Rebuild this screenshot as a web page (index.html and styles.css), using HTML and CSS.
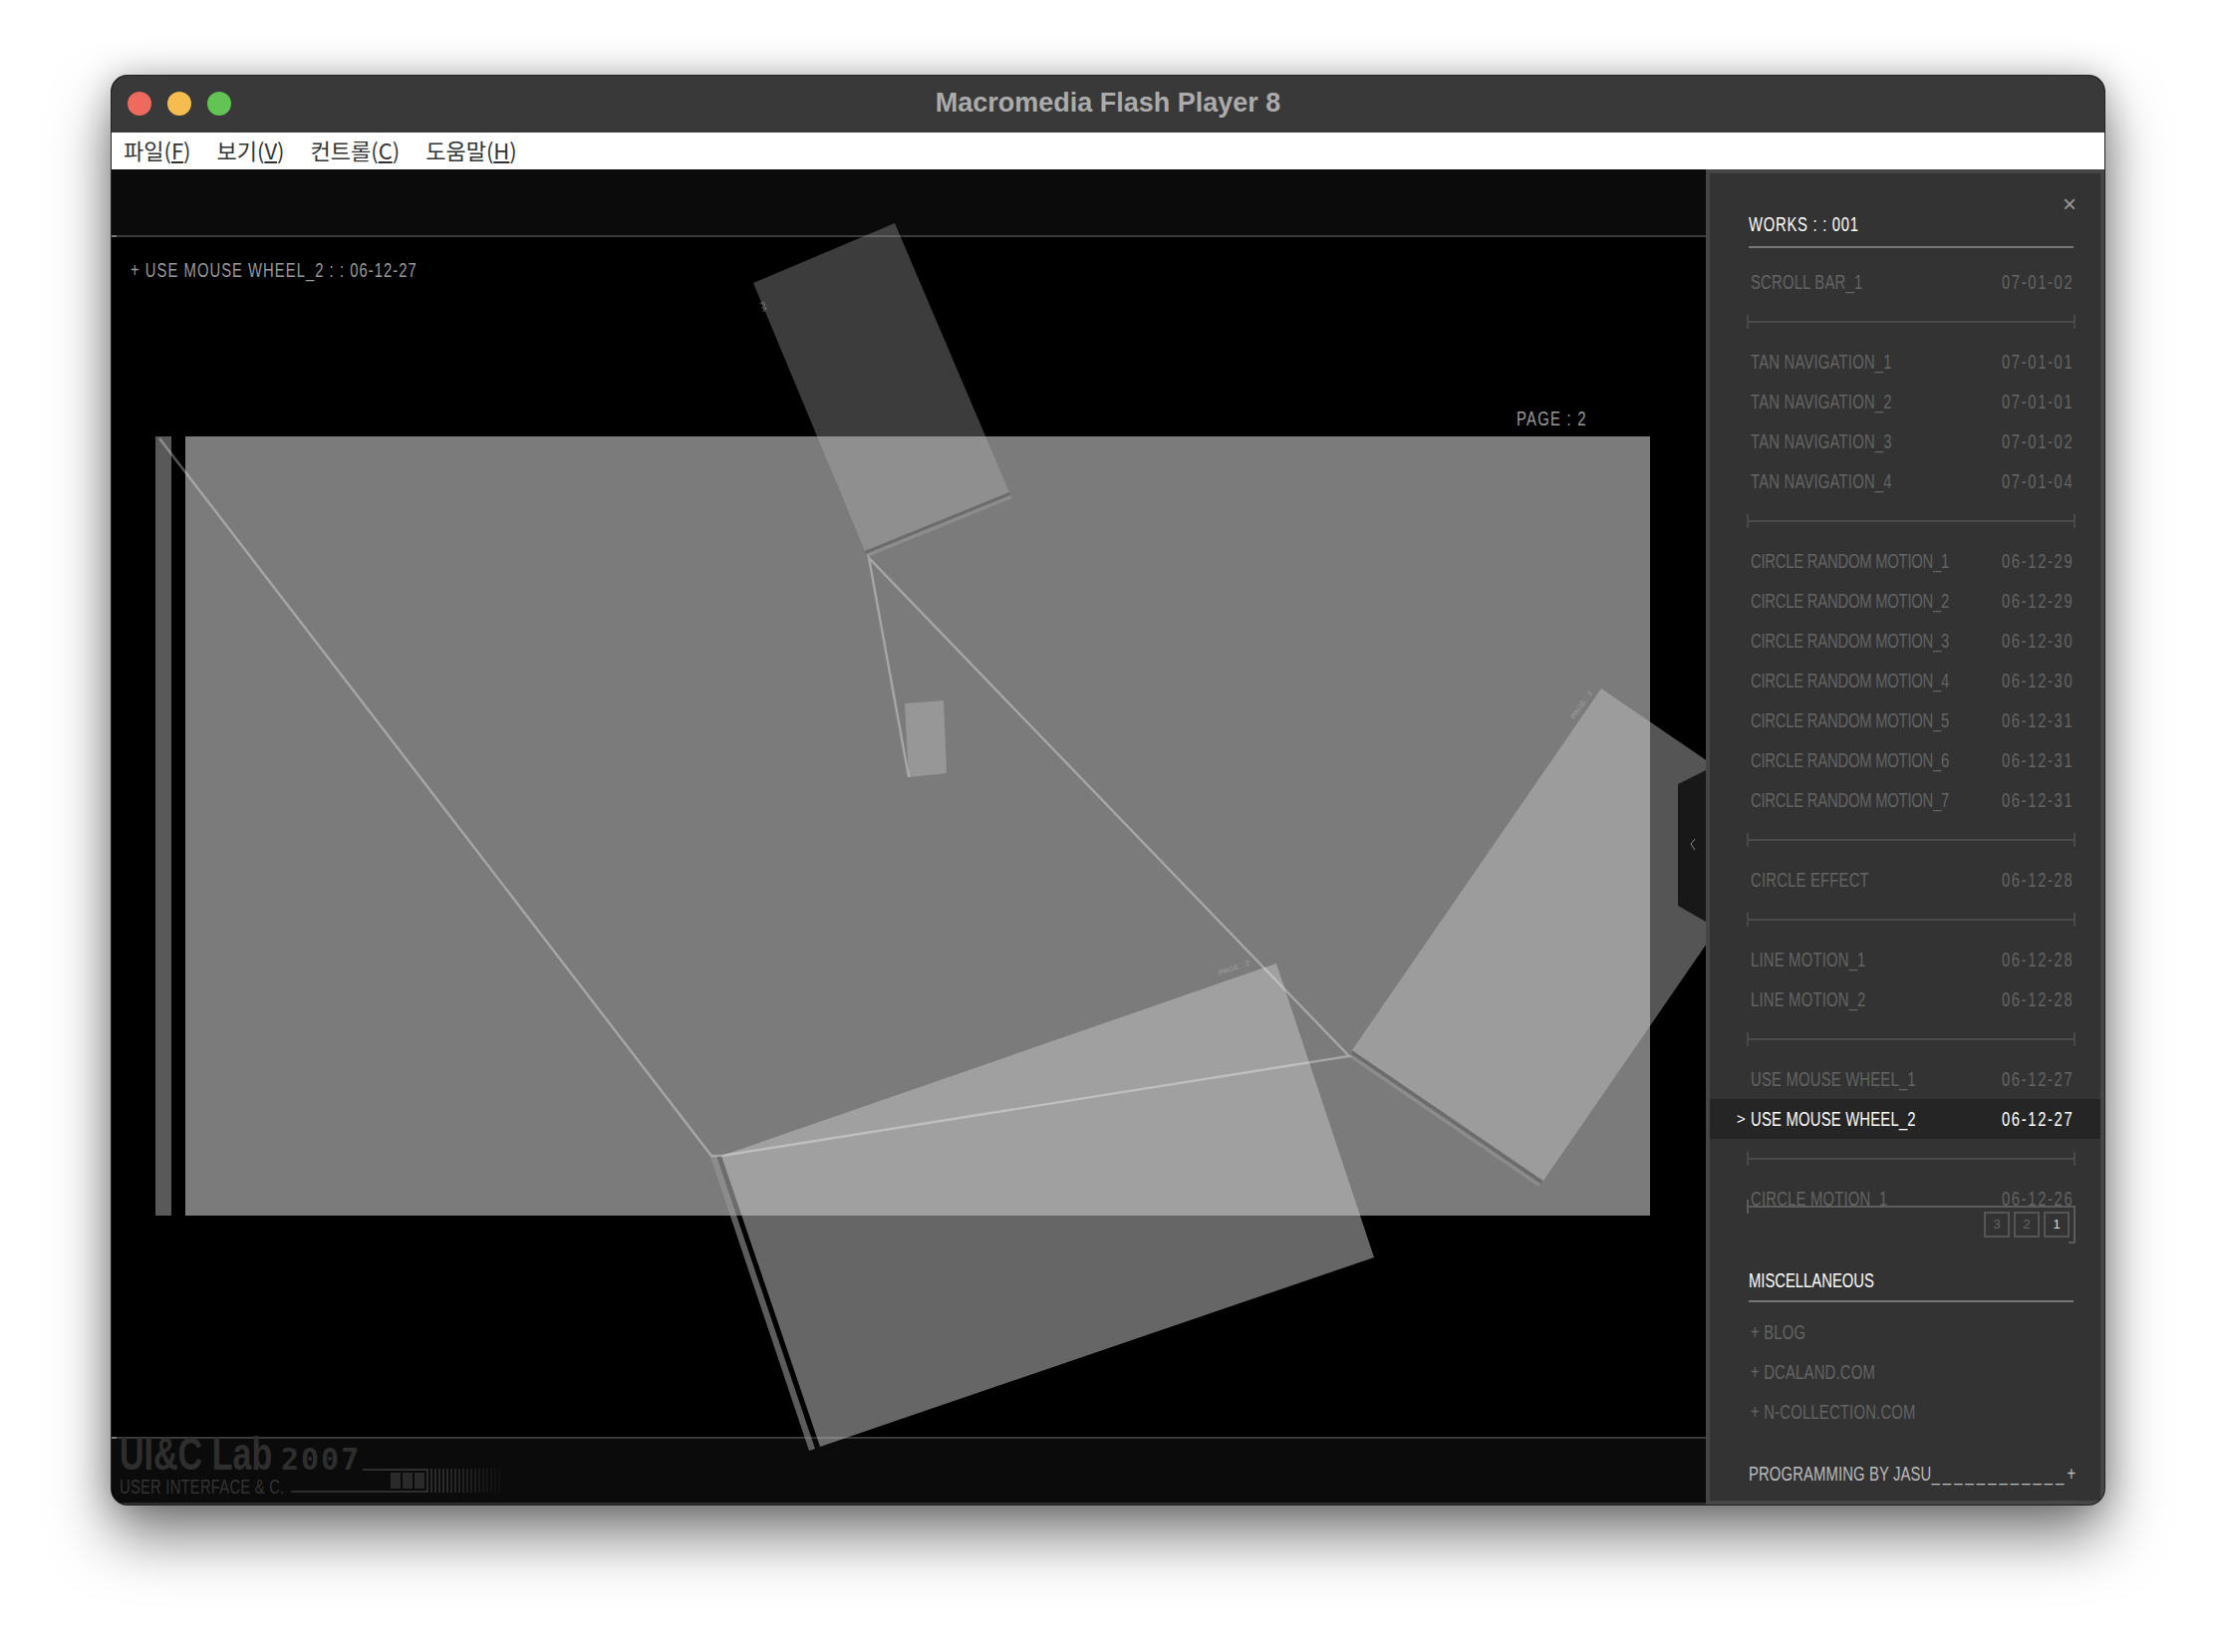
FILE: index.html
```html
<!DOCTYPE html>
<html lang="en">
<head>
  <meta charset="UTF-8">
  <title>Macromedia Flash Player 8</title>
  <link rel="stylesheet" href="styles.css">
</head>
<body>

<div class="window">
  <header class="titlebar">
    <div class="lights">
      <span class="light red"></span>
      <span class="light yellow"></span>
      <span class="light green"></span>
    </div>
    <h1>Macromedia Flash Player 8</h1>
  </header>

  <nav class="menubar">
    <a href="#">파일(<u>F</u>)</a>
    <a href="#">보기(<u>V</u>)</a>
    <a href="#">컨트롤(<u>C</u>)</a>
    <a href="#">도움말(<u>H</u>)</a>
  </nav>

  <div class="main">
    <section class="stage">
      <div class="stage-top"></div>
      <div class="stage-mid">
        <p class="caption"><span class="px">+ USE MOUSE WHEEL_2 : : 06-12-27</span></p>
        <p class="page-no"><span class="px">PAGE : 2</span></p>
      </div>
      <div class="stage-foot">
        <div class="brand"><span class="brand-name">UI&amp;C Lab</span><span class="brand-year">2007</span></div>
        <div class="tagline"><span class="px">USER INTERFACE &amp; C.</span></div>
      </div>

      <!-- the flash scene, in page coordinates -->
      <svg class="scene" viewBox="112 170 1600 1340">
        <rect x="112" y="236" width="5" height="2" fill="#777"/>
        <rect x="112" y="1442" width="5" height="2" fill="#777"/>

        <rect x="156" y="438" width="16" height="782" fill="#595959"/>
        <rect x="186" y="438" width="1470" height="782" fill="#7b7b7b"/>

        <polygon points="756,284 898,224 1013,494 868,553" fill="#b9b9b9" opacity="0.325"/>
        <polygon class="gap" points="868,553 1013,494 1014,497 869,556"/>
        <polygon class="band" points="869,556 1014,497 1016,500 871,559"/>

        <polygon points="908,706 947,703 950,776 912,780" fill="#c4c4c4" opacity="0.4"/>

        <polygon points="1607,691 1799,822 1549,1185 1357,1054" fill="#cacaca" opacity="0.42"/>
        <polygon class="gap" points="1358,1055 1548,1185 1546,1188 1356,1058"/>
        <polygon class="band" points="1356,1058 1546,1188 1544,1191 1354,1061"/>

        <polygon points="1281,967 1379,1262 823,1452 724,1160" fill="#c0c0c0" opacity="0.53"/>
        <polygon class="gap" points="719,1160 724,1160 823,1452 818,1454"/>
        <polygon class="band" points="713,1161 719,1160 818,1454 812,1456"/>

        <polyline class="wire" points="160,440 714,1160 724,1160 1354,1060 872,560 912,780"/>

        <g class="tiny-text">
          <text transform="translate(1224,979) rotate(-19)">PAGE : 2</text>
          <text transform="translate(1580,722) rotate(-55)">PAGE : 2</text>
          <text transform="translate(762,304) rotate(67)">PA</text>
        </g>

        <!-- collapse tab -->
        <polygon points="1684,787 1712,773 1712,925 1684,909" fill="#181818"/>
        <polyline points="1701,842 1697,847 1701,853" fill="none" stroke="#888" stroke-width="1"/>

        <!-- progress strip in the footer -->
        <g fill="none" stroke="#2e2e2e" stroke-width="2">
          <polyline points="364,1475 429,1475 429,1497 292,1497"/>
        </g>
        <g fill="#2a2a2a">
          <rect x="392" y="1478" width="10" height="16"/>
          <rect x="404" y="1478" width="10" height="16"/>
          <rect x="416" y="1478" width="10" height="16"/>
        </g>
        <g stroke="#2b2b2b" stroke-width="2">
          <line x1="433" y1="1474" x2="433" y2="1498"/>
          <line x1="437" y1="1474" x2="437" y2="1498"/>
          <line x1="441" y1="1474" x2="441" y2="1498"/>
          <line x1="445" y1="1474" x2="445" y2="1498"/>
          <line x1="449" y1="1474" x2="449" y2="1498"/>
          <line x1="453" y1="1474" x2="453" y2="1498" stroke="#272727"/>
          <line x1="457" y1="1474" x2="457" y2="1498" stroke="#272727"/>
          <line x1="461" y1="1474" x2="461" y2="1498" stroke="#242424"/>
          <line x1="465" y1="1474" x2="465" y2="1498" stroke="#222"/>
          <line x1="469" y1="1474" x2="469" y2="1498" stroke="#202020"/>
          <line x1="473" y1="1474" x2="473" y2="1498" stroke="#1e1e1e"/>
          <line x1="477" y1="1474" x2="477" y2="1498" stroke="#1c1c1c"/>
          <line x1="481" y1="1474" x2="481" y2="1498" stroke="#1a1a1a"/>
          <line x1="485" y1="1474" x2="485" y2="1498" stroke="#181818"/>
          <line x1="489" y1="1474" x2="489" y2="1498" stroke="#161616"/>
          <line x1="493" y1="1474" x2="493" y2="1498" stroke="#141414"/>
          <line x1="497" y1="1474" x2="497" y2="1498" stroke="#121212"/>
          <line x1="501" y1="1474" x2="501" y2="1498" stroke="#101010"/>
        </g>
      </svg>
    </section>

    <aside class="sidebar">
      <button class="close">×</button>
      <h2 class="side-title works"><span class="px">WORKS : : 001</span></h2>

      <div class="work-list">
        <div class="row"><span class="px">SCROLL BAR_1</span><span class="px date">07-01-02</span></div>
        <div class="sep"></div>
        <div class="row"><span class="px">TAN NAVIGATION_1</span><span class="px date">07-01-01</span></div>
        <div class="row"><span class="px">TAN NAVIGATION_2</span><span class="px date">07-01-01</span></div>
        <div class="row"><span class="px">TAN NAVIGATION_3</span><span class="px date">07-01-02</span></div>
        <div class="row"><span class="px">TAN NAVIGATION_4</span><span class="px date">07-01-04</span></div>
        <div class="sep"></div>
        <div class="row"><span class="px tight">CIRCLE RANDOM MOTION_1</span><span class="px date">06-12-29</span></div>
        <div class="row"><span class="px tight">CIRCLE RANDOM MOTION_2</span><span class="px date">06-12-29</span></div>
        <div class="row"><span class="px tight">CIRCLE RANDOM MOTION_3</span><span class="px date">06-12-30</span></div>
        <div class="row"><span class="px tight">CIRCLE RANDOM MOTION_4</span><span class="px date">06-12-30</span></div>
        <div class="row"><span class="px tight">CIRCLE RANDOM MOTION_5</span><span class="px date">06-12-31</span></div>
        <div class="row"><span class="px tight">CIRCLE RANDOM MOTION_6</span><span class="px date">06-12-31</span></div>
        <div class="row"><span class="px tight">CIRCLE RANDOM MOTION_7</span><span class="px date">06-12-31</span></div>
        <div class="sep"></div>
        <div class="row"><span class="px">CIRCLE EFFECT</span><span class="px date">06-12-28</span></div>
        <div class="sep"></div>
        <div class="row"><span class="px">LINE MOTION_1</span><span class="px date">06-12-28</span></div>
        <div class="row"><span class="px">LINE MOTION_2</span><span class="px date">06-12-28</span></div>
        <div class="sep"></div>
        <div class="row"><span class="px">USE MOUSE WHEEL_1</span><span class="px date">06-12-27</span></div>
        <div class="row active"><span class="px">USE MOUSE WHEEL_2</span><span class="px date">06-12-27</span></div>
        <div class="sep"></div>
        <div class="row"><span class="px">CIRCLE MOTION_1</span><span class="px date">06-12-26</span></div>
      </div>

      <div class="pager">
        <a href="#">3</a>
        <a href="#">2</a>
        <a href="#" class="current">1</a>
      </div>

      <h2 class="side-title misc"><span class="px">MISCELLANEOUS</span></h2>
      <ul class="links">
        <li><span class="px">+ BLOG</span></li>
        <li><span class="px">+ DCALAND.COM</span></li>
        <li><span class="px">+ N-COLLECTION.COM</span></li>
      </ul>

      <p class="credit"><span class="px">PROGRAMMING BY JASU<span class="dashes">____________</span>+</span></p>
    </aside>
  </div>
</div>

</body>
</html>
```

FILE: styles.css
```css
html, body {
  margin: 0;
  padding: 0;
  background: #fff;
}
body {
  width: 2224px;
  height: 1658px;
  padding: 76px 112px 0;
  box-sizing: border-box;
  overflow: hidden;
}
.window {
  width: 2000px;
  height: 1434px;
  border-radius: 16px;
  overflow: hidden;
  background: #000;
  display: flex;
  flex-direction: column;
  box-shadow: 0 0 0 1px #222, 0 32px 60px rgba(0,0,0,0.5), 0 0 34px rgba(0,0,0,0.25);
}

/* the old flash bitmap font is tall and narrow: squeeze a plain sans to get there */
.px {
  display: inline-block;
  font: 20px/20px "Liberation Sans", sans-serif;
  white-space: nowrap;
  letter-spacing: 0.3px;
  transform: scaleX(0.74);
  transform-origin: left center;
}
.px.tight {
  letter-spacing: -0.3px;
}
.px.date {
  letter-spacing: 2.2px;
}

.titlebar {
  height: 57px;
  background: #393939;
  display: flex;
  align-items: center;
  justify-content: center;
  position: relative;
  flex: none;
}
.titlebar h1 {
  margin: 0 0 2px;
  font: bold 27px "Liberation Sans", sans-serif;
  color: #ababab;
}
.lights {
  position: absolute;
  left: 16px;
  top: 16px;
  display: flex;
  gap: 16px;
}
.light {
  width: 24px;
  height: 24px;
  border-radius: 50%;
}
.red { background: #ee6a5f; }
.yellow { background: #f5bd4f; }
.green { background: #61c454; }

.menubar {
  height: 37px;
  background: #fff;
  display: flex;
  align-items: center;
  padding: 0 0 3px 12px;
  box-sizing: border-box;
  gap: 26px;
  flex: none;
}
.menubar a {
  font: 22px/30px "Noto Sans CJK KR", sans-serif;
  color: #333;
  text-decoration: none;
}

.main {
  flex: 1;
  display: flex;
  min-height: 0;
}

.stage {
  width: 1600px;
  position: relative;
  display: flex;
  flex-direction: column;
  background: #000;
}
.stage-top {
  height: 66px;
  background: #0b0b0b;
  border-bottom: 2px solid #3a3a3a;
  flex: none;
}
.stage-mid {
  flex: 1;
  display: flex;
  flex-direction: column;
  padding-left: 19px;
}
.caption {
  margin: 23px 0 0;
  line-height: 20px;
  color: #999;
}
.caption .px {
  letter-spacing: 1.4px;
}
.page-no {
  margin: 127px 0 0 1391px;
  line-height: 20px;
  color: #999;
}
.page-no .px {
  letter-spacing: 1.7px;
}
.stage-foot {
  height: 68px;
  background: #0b0b0b;
  border-top: 2px solid #3a3a3a;
  border-bottom: 2px solid #2c2c2c;
  box-sizing: border-box;
  padding-left: 8px;
  flex: none;
}
.brand {
  display: flex;
  align-items: baseline;
  margin-top: -2px;
  height: 34px;
  color: #2e2e2e;
}
.brand-name {
  width: 162px;
  font: bold 46px/34px "Liberation Sans", sans-serif;
  white-space: nowrap;
  transform: scaleX(0.74);
  transform-origin: left center;
}
.brand-year {
  font: bold 30px/34px "DejaVu Sans Mono", monospace;
  letter-spacing: 2px;
}
.tagline {
  margin-top: 6px;
  line-height: 20px;
  color: #333;
}
.scene {
  position: absolute;
  left: 0;
  top: 0;
  width: 1600px;
  height: 1340px;
}
.wire {
  fill: none;
  stroke: #fff;
  stroke-opacity: 0.33;
  stroke-width: 2.4;
}
.band {
  fill: #979797;
  opacity: 0.61;
}
.gap {
  fill: #000;
  opacity: 0.12;
}
.tiny-text {
  font: 8px "Liberation Sans", sans-serif;
  fill: #bbb;
  opacity: 0.6;
}

.sidebar {
  width: 400px;
  box-sizing: border-box;
  background: #333;
  border: 4px solid #464646;
  position: relative;
  display: flex;
  flex-direction: column;
  color: #646464;
}
.close {
  position: absolute;
  right: 24px;
  top: 19px;
  padding: 0;
  border: 0;
  background: none;
  font: 24px/24px "Liberation Sans", sans-serif;
  color: #999;
}
.side-title {
  margin: 38px 0 0 39px;
  width: 326px;
  height: 37px;
  line-height: 26px;
  box-sizing: border-box;
  border-bottom: 2px solid #777;
  font-size: 20px;
  font-weight: normal;
  color: #fff;
}
.side-title.works .px {
  letter-spacing: 1px;
}
.side-title.misc .px {
  letter-spacing: 0;
}
.work-list {
  height: 947px;
  margin-top: 14px;
  overflow: hidden;
  flex: none;
}
.row {
  height: 40px;
  display: grid;
  grid-template-columns: 252px auto;
  align-items: center;
  padding-left: 41px;
}
.row.active {
  background: #252525;
  color: #fff;
  position: relative;
}
.row.active::before {
  content: ">";
  position: absolute;
  left: 27px;
  top: 10px;
  font: 15px/20px "Liberation Sans", sans-serif;
}
.sep {
  height: 40px;
  margin-left: 37px;
  width: 330px;
  box-sizing: border-box;
  position: relative;
}
.sep::before {
  content: "";
  position: absolute;
  left: 0;
  right: 0;
  top: 13px;
  height: 14px;
  border-left: 2px solid #4a4a4a;
  border-right: 2px solid #4a4a4a;
  background: linear-gradient(#4a4a4a, #4a4a4a) center / 100% 2px no-repeat;
}
.pager {
  margin-left: 37px;
  width: 330px;
  height: 38px;
  box-sizing: border-box;
  border-top: 2px solid #5c5c5c;
  border-right: 2px solid #5c5c5c;
  display: flex;
  justify-content: flex-end;
  gap: 4px;
  padding: 4px 4px 0 0;
  position: relative;
  flex: none;
}
.pager::before {
  content: "";
  position: absolute;
  left: 0;
  top: -8px;
  width: 2px;
  height: 14px;
  background: #5c5c5c;
}
.pager::after {
  content: "";
  position: absolute;
  right: 0;
  bottom: 0;
  width: 5px;
  height: 2px;
  background: #5c5c5c;
}
.pager a {
  width: 26px;
  height: 26px;
  box-sizing: border-box;
  border: 2px solid #555;
  text-align: center;
  font: 13px/22px "Liberation Sans", sans-serif;
  color: #666;
  text-decoration: none;
}
.pager a.current {
  color: #ddd;
}
.side-title.misc {
  margin-top: 22px;
  line-height: 30px;
}
.links {
  list-style: none;
  margin: 12px 0 0;
  padding: 0 0 0 41px;
}
.links li {
  height: 40px;
  line-height: 40px;
}
.credit {
  margin: 30px 0 0 39px;
  line-height: 20px;
  color: #bbb;
}
.credit .px {
  letter-spacing: 0.2px;
}
.dashes {
  letter-spacing: 4.2px;
}
```
